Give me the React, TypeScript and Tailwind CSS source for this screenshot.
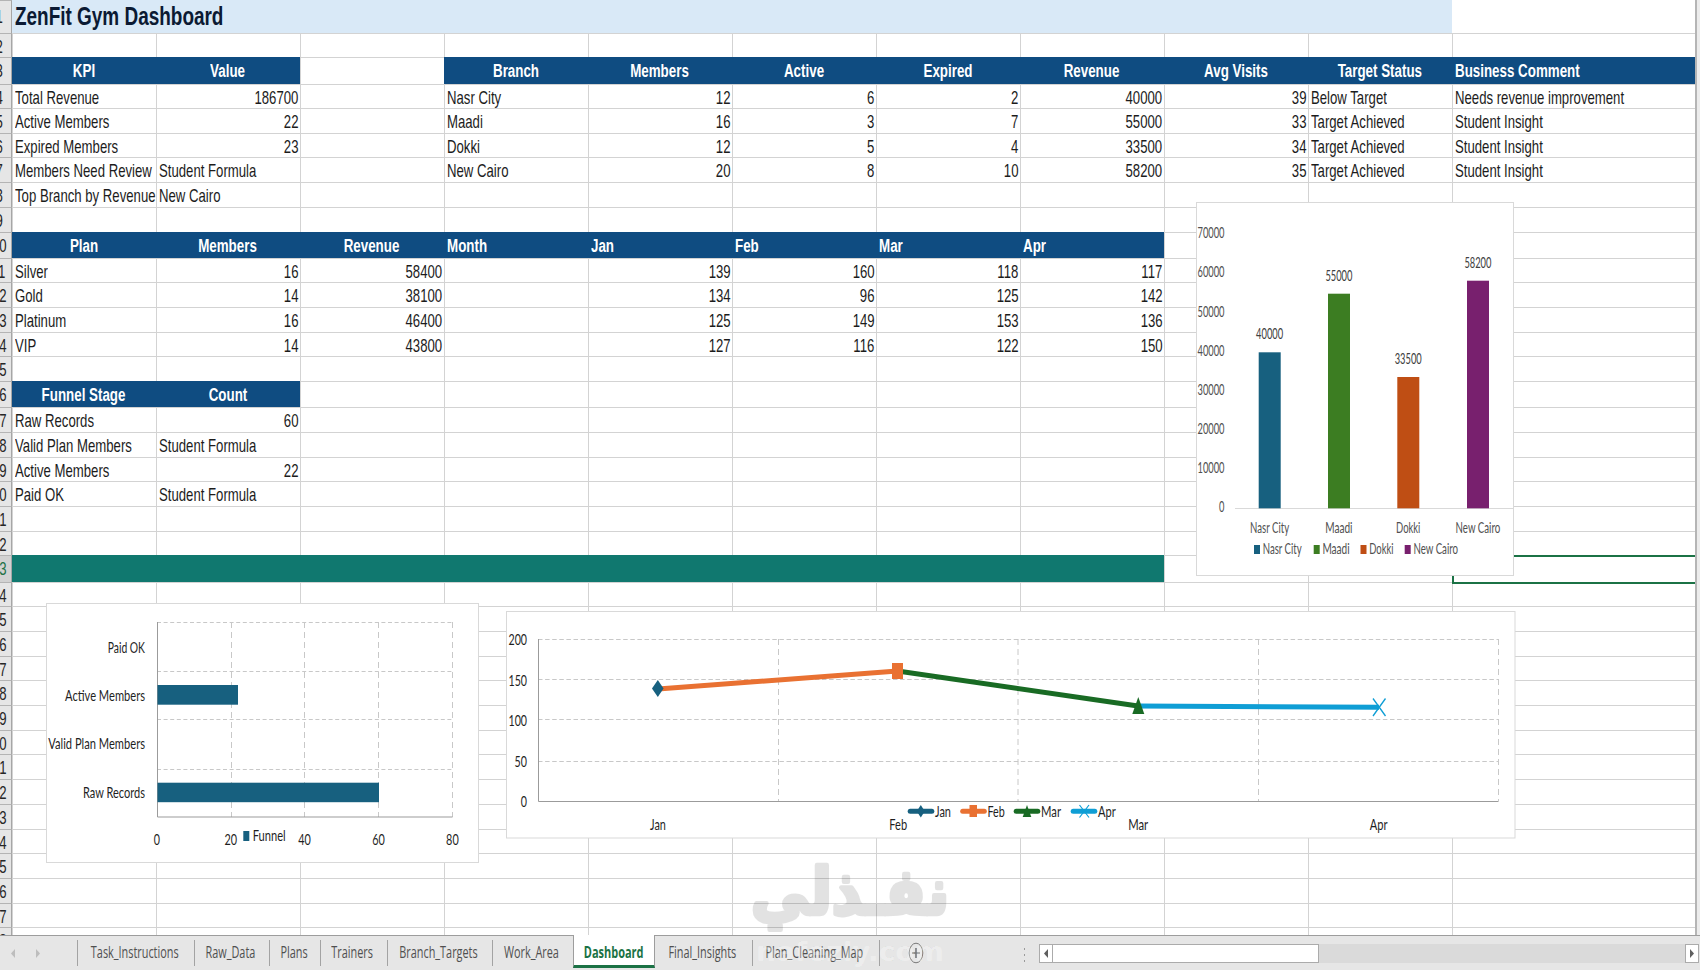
import React from "react";
import clsx from "clsx";

type Align = "left" | "center" | "right";
type Fill = "blue" | "teal" | "title" | "blank";

interface Cell {
  text?: string | number;
  align?: Align;
  fill?: Fill;
}

interface Row {
  height: number;
  cells?: Cell[];
}

const COLUMNS = 11;

// helpers for building rows
const head = (text: string, align: Align = "center"): Cell => ({ text, align, fill: "blue" });
const val = (text: string | number): Cell => ({ text });
const gap: Cell = {};
const fillRow = (fill: Fill, count: number): Cell[] => Array.from({ length: count }, () => ({ fill }));

const rows: Row[] = [
  { height: 33, cells: [{ text: "ZenFit Gym Dashboard", fill: "title" }, ...fillRow("title", 9), { fill: "blank" }] },
  { height: 24 },
  {
    height: 27,
    cells: [
      head("KPI"),
      head("Value"),
      gap,
      head("Branch"),
      head("Members"),
      head("Active"),
      head("Expired"),
      head("Revenue"),
      head("Avg Visits"),
      head("Target Status"),
      head("Business Comment", "left"),
    ],
  },
  {
    height: 24,
    cells: ["Total Revenue", 186700, "", "Nasr City", 12, 6, 2, 40000, 39, "Below Target", "Needs revenue improvement"].map(val),
  },
  {
    height: 25,
    cells: ["Active Members", 22, "", "Maadi", 16, 3, 7, 55000, 33, "Target Achieved", "Student Insight"].map(val),
  },
  {
    height: 24,
    cells: ["Expired Members", 23, "", "Dokki", 12, 5, 4, 33500, 34, "Target Achieved", "Student Insight"].map(val),
  },
  {
    height: 25,
    cells: ["Members Need Review", "Student Formula", "", "New Cairo", 20, 8, 10, 58200, 35, "Target Achieved", "Student Insight"].map(val),
  },
  { height: 25, cells: ["Top Branch by Revenue", "New Cairo"].map(val) },
  { height: 25 },
  {
    height: 26,
    cells: [
      head("Plan"),
      head("Members"),
      head("Revenue"),
      head("Month", "left"),
      head("Jan", "left"),
      head("Feb", "left"),
      head("Mar", "left"),
      head("Apr", "left"),
    ],
  },
  { height: 24, cells: ["Silver", 16, 58400, "", 139, 160, 118, 117].map(val) },
  { height: 25, cells: ["Gold", 14, 38100, "", 134, 96, 125, 142].map(val) },
  { height: 25, cells: ["Platinum", 16, 46400, "", 125, 149, 153, 136].map(val) },
  { height: 24, cells: ["VIP", 14, 43800, "", 127, 116, 122, 150].map(val) },
  { height: 25 },
  { height: 26, cells: [head("Funnel Stage"), head("Count")] },
  { height: 25, cells: ["Raw Records", 60].map(val) },
  { height: 25, cells: ["Valid Plan Members", "Student Formula"].map(val) },
  { height: 24, cells: ["Active Members", 22].map(val) },
  { height: 25, cells: ["Paid OK", "Student Formula"].map(val) },
  { height: 25 },
  { height: 24 },
  { height: 27, cells: fillRow("teal", 8) },
  { height: 24 },
  { height: 25 },
  { height: 25 },
  { height: 24 },
  { height: 25 },
  { height: 25 },
  { height: 24 },
  { height: 25 },
  { height: 25 },
  { height: 25 },
  { height: 24 },
  { height: 25 },
  { height: 25 },
  { height: 24 },
  { height: 25 },
];

const ACTIVE_ROW = 23;

const fills: Record<Fill, string> = {
  blue: "bg-[#0f4c81] border-[#0f4c81] text-white font-bold text-[18px] leading-[26px]",
  teal: "bg-[#10786f] border-[#10786f]",
  title: "bg-[#d9e9f7] border-[#d9e9f7] text-[#0b1a33] font-bold text-[25.5px] leading-[31px]",
  blank: "bg-white border-white",
};

const SheetCell = ({ cell, last, selected }: { cell: Cell; last: boolean; selected: boolean }) => {
  const align = cell.align ?? (typeof cell.text === "number" ? "right" : "left");
  return (
    <div
      className={clsx(
        "flex shrink-0 border-l border-t whitespace-nowrap",
        last ? "w-[243px]" : "w-36",
        cell.fill ? fills[cell.fill] : "border-[#d3d3d3] text-[#1c1c1c] text-[18.4px] leading-[26px]",
        align === "left" && "justify-start pl-[1.5px]",
        align === "center" && "justify-center pr-px",
        align === "right" && "justify-end pr-[1.5px]",
        selected && "relative"
      )}
    >
      <span
        className={clsx(
          align === "left" && "origin-left",
          align === "center" && "origin-center",
          align === "right" && "origin-right",
          cell.fill === "blue" ? "scale-x-[0.742]" : cell.fill === "title" ? "scale-x-[0.743]" : "scale-x-[0.716]"
        )}
      >
        {cell.text}
      </span>
      {selected && <div className="absolute -left-px right-0 -top-px -bottom-0.5 border-2 border-r-0 border-[#1b7245]" />}
    </div>
  );
};

const SheetRow = ({ row, index }: { row: Row; index: number }) => {
  const active = index === ACTIVE_ROW;
  return (
    <div className="flex shrink-0" style={{ height: row.height }}>
      <div
        className={clsx(
          "flex w-3 shrink-0 justify-center border-r border-t border-r-[#a6a6a6] border-t-[#b4b4b4] text-[18.4px] leading-[26px]",
          active ? "bg-[#d2d2d2] text-[#217346]" : "bg-[#e6e6e6] text-[#262626]",
          index === 1 && "items-center"
        )}
      >
        <span className="-ml-[13px] scale-x-[0.716]">{index}</span>
      </div>
      {Array.from({ length: COLUMNS }, (_, i) => (
        <SheetCell
          key={i}
          cell={row.cells?.[i] ?? gap}
          last={i === COLUMNS - 1}
          selected={active && i === COLUMNS - 1}
        />
      ))}
    </div>
  );
};

interface LabelProps {
  x: number;
  y: number;
  w: number;
  anchor?: "start" | "middle" | "end";
  children: React.ReactNode;
}

// chart text is squeezed to a given width
const Label = ({ x, y, w, anchor = "middle", children }: LabelProps) => (
  <text x={x} y={y} textAnchor={anchor} textLength={w} lengthAdjust="spacingAndGlyphs">
    {children}
  </text>
);

const branches = [
  { name: "Nasr City", value: 40000, x: 1258.7, top: 352.3, w: 39, color: "#17607f", legend: 1254 },
  { name: "Maadi", value: 55000, x: 1328, top: 293.7, w: 27.3, color: "#3c7d22", legend: 1313.7 },
  { name: "Dokki", value: 33500, x: 1397.3, top: 377, w: 24.3, color: "#bf4e14", legend: 1360.5 },
  { name: "New Cairo", value: 58200, x: 1467, top: 280.7, w: 44.7, color: "#78206e", legend: 1404.7 },
];

const BranchChart = () => (
  <svg
    className="absolute left-[1196px] top-[202px] h-[374px] w-[318px] text-[15px]"
    viewBox="1196 202 318 374"
    fill="#505050"
  >
    <rect x="1196.5" y="202.5" width="317" height="373" fill="#fff" stroke="#d9d9d9" />
    {[70000, 60000, 50000, 40000, 30000, 20000, 10000, 0].map((tick, i) => (
      <Label key={tick} x={1224.5} y={238.3 + i * 39.15} w={tick ? 27 : 5.4} anchor="end">
        {tick}
      </Label>
    ))}
    <path d="M1235 508.5H1513" stroke="#d9d9d9" />
    {branches.map((b) => (
      <g key={b.name}>
        <rect x={b.x} y={b.top} width="22" height={508.3 - b.top} fill={b.color} />
        <g fill="#404040">
          <Label x={b.x + 10.9} y={b.top - 12.9} w={27}>
            {b.value}
          </Label>
        </g>
        <Label x={b.x + 10.9} y={533.4} w={b.w}>
          {b.name}
        </Label>
        <rect x={b.legend} y="545" width="6" height="9" fill={b.color} />
        <Label x={b.legend + 8.7} y={554.2} w={b.w} anchor="start">
          {b.name}
        </Label>
      </g>
    ))}
  </svg>
);

const stages = [
  { name: "Paid OK", y: 653, w: 37.3 },
  { name: "Active Members", y: 701.3, w: 80 },
  { name: "Valid Plan Members", y: 749.3, w: 96.7 },
  { name: "Raw Records", y: 798.4, w: 62 },
];

const FunnelChart = () => (
  <svg
    className="absolute left-[46px] top-[603px] h-[260px] w-[433px] text-[15px]"
    viewBox="46 603 433 260"
    fill="#1f1f1f"
  >
    <rect x="46.5" y="603.5" width="432" height="259" fill="#fff" stroke="#d9d9d9" />
    <g stroke="#c8c8c8" strokeDasharray="4 2.6">
      <path d="M157 622.5H452M157 671.5H452M157 719.5H452M157 769.5H452" />
      <path d="M231.5 622V817M304.5 622V817M378.5 622V817M452.5 622V817" strokeDasharray="6 4" />
    </g>
    <path d="M157.5 622V817H452.5" fill="none" stroke="#9b9b9b" />
    <rect x="157.5" y="685" width="80.5" height="19.7" fill="#17607f" />
    <rect x="157.5" y="782.7" width="221.5" height="19.5" fill="#17607f" />
    {stages.map((s) => (
      <Label key={s.name} x={145} y={s.y} w={s.w} anchor="end">
        {s.name}
      </Label>
    ))}
    {[0, 20, 40, 60, 80].map((tick, i) => (
      <Label key={tick} x={156.8 + i * 73.9} y={845.3} w={tick ? 12.6 : 6.2}>
        {tick}
      </Label>
    ))}
    <rect x="243.3" y="831" width="6" height="10" fill="#17607f" />
    <Label x={252.7} y={841.2} w={33} anchor="start">
      Funnel
    </Label>
  </svg>
);

const legendLines = [
  { name: "Jan", x: 908, color: "#17607f", w: 16 },
  { name: "Feb", x: 960.5, color: "#e97132", w: 17.3 },
  { name: "Mar", x: 1014, color: "#196b24", w: 20 },
  { name: "Apr", x: 1071, color: "#0f9ed5", w: 17.7 },
];

const MonthChart = () => (
  <svg
    className="absolute left-[506px] top-[611px] h-[228px] w-[1010px] text-[15px]"
    viewBox="506 611 1010 228"
    fill="#1f1f1f"
  >
    <rect x="506.5" y="611.5" width="1008.5" height="226.5" fill="#fff" stroke="#d9d9d9" />
    <g stroke="#c8c8c8" strokeDasharray="4.5 2.6">
      <path d="M538 639.5H1498M538 679.5H1498M538 719.5H1498M538 761.5H1498" />
      <path d="M778.5 639V801M1018 639V801M1258.5 639V801M1498.5 639V801" strokeDasharray="6 4" />
    </g>
    <path d="M538.5 639V801.5H1498.5" fill="none" stroke="#9b9b9b" />
    {[200, 150, 100, 50, 0].map((tick, i) => (
      <Label key={tick} x={527} y={645.2 + i * 40.5} w={tick > 50 ? 18.5 : tick ? 12.4 : 6.2} anchor="end">
        {tick}
      </Label>
    ))}
    <g strokeWidth="5" fill="none">
      <path d="M658 689L897.5 671" stroke="#e97132" />
      <path d="M897.5 671L1138 706" stroke="#196b24" />
      <path d="M1138 706L1379 707.3" stroke="#0f9ed5" />
    </g>
    <path d="M657.8 680l5.8 8.5-5.8 8.5-5.8-8.5z" fill="#17607f" />
    <rect x="892" y="663" width="11" height="16" fill="#e97132" />
    <path d="M1138.3 697l6 17h-12z" fill="#196b24" />
    <path d="M1373 698.5l12.5 17.5M1385.5 698.5L1373 716" stroke="#0f9ed5" strokeWidth="1.3" />
    <Label x={658} y={829.6} w={15.8}>Jan</Label>
    <Label x={898.2} y={829.6} w={17.8}>Feb</Label>
    <Label x={1138.2} y={829.6} w={20}>Mar</Label>
    <Label x={1378.6} y={829.6} w={17.8}>Apr</Label>
    {legendLines.map((l) => (
      <g key={l.name}>
        <path d={`M${l.x + 2.2} 811.3h21.6`} stroke={l.color} strokeWidth="5" strokeLinecap="round" />
        <Label x={l.x + 27} y={816.8} w={l.w} anchor="start">
          {l.name}
        </Label>
      </g>
    ))}
    <path d="M920.8 805l4 6.3-4 6.3-4-6.3z" fill="#17607f" />
    <rect x="969.5" y="805" width="7.5" height="12" fill="#e97132" />
    <path d="M1027 805l4.3 12h-8.6z" fill="#196b24" />
    <path d="M1079.5 805l9.5 12.5M1089 805l-9.5 12.5" stroke="#0f9ed5" strokeWidth="1.2" />
  </svg>
);

const tabs = [
  { name: "Task_Instructions", width: 117 },
  { name: "Raw_Data", width: 75 },
  { name: "Plans", width: 51 },
  { name: "Trainers", width: 67 },
  { name: "Branch_Targets", width: 105 },
  { name: "Work_Area", width: 81 },
  { name: "Dashboard", width: 82 },
  { name: "Final_Insights", width: 97 },
  { name: "Plan_Cleaning_Map", width: 127 },
];

const Arrow = ({ right }: { right?: boolean }) => (
  <svg viewBox="0 0 4 9" className="h-[9px] w-1" fill="currentColor">
    <path d={right ? "M0 0l4 4.5L0 9z" : "M4 0L0 4.5 4 9z"} />
  </svg>
);

const TabBar = () => {
  const [current, setCurrent] = React.useState("Dashboard");
  return (
    <div className="flex h-[35px] shrink-0 border-t border-[#9d9d9d] bg-[#e6e6e6] font-['Open_Sans',sans-serif]">
      <div className="flex w-[77px] shrink-0 items-center gap-[21px] pl-[11px] text-[#bdbdbd]">
        <Arrow />
        <Arrow right />
      </div>
      {tabs.map((tab, i) => {
        const active = tab.name === current;
        return (
          <button
            key={tab.name}
            onClick={() => setCurrent(tab.name)}
            style={{ width: tab.width }}
            className={clsx(
              "flex shrink-0 justify-center whitespace-nowrap text-[16.8px]",
              active
                ? "-mt-px h-[33px] border-x border-b-[3px] border-x-[#9d9d9d] border-b-[#1b7245] bg-white leading-[34px] font-bold text-[#1b7245]"
                : "relative pr-0.5 leading-[32px] text-[#505050]"
            )}
          >
            {!active && tabs[i - 1]?.name !== current && <span className="absolute left-0 top-1 h-[26px] w-px bg-[#a3a3a3]" />}
            <span className={active ? "scale-x-[0.655]" : "scale-x-[0.648]"}>{tab.name}</span>
          </button>
        );
      })}
      <div className="mt-1 h-[26px] w-px bg-[#a3a3a3]" />
      <svg className="ml-[28px] mt-[6px] h-[22px] w-4" viewBox="0 0 16 22" fill="none" stroke="#777">
        <ellipse cx="8" cy="11" rx="6.8" ry="9.8" />
        <path d="M8 6v10M4 11h8" strokeWidth="1.6" />
      </svg>
      <div className="ml-[100px] mt-3 flex w-px flex-col gap-1">
        <span className="h-[2px] bg-[#9a9a9a]" />
        <span className="h-[2px] bg-[#9a9a9a]" />
        <span className="h-[2px] bg-[#9a9a9a]" />
      </div>
      <div className="ml-[14px] mt-2 flex h-[19px] w-[660px] bg-[#dadada] text-[#5f5f5f]">
        <div className="flex w-3.5 items-center justify-center border border-[#ababab] bg-white">
          <Arrow />
        </div>
        <div className="-ml-px w-[267px] border border-[#ababab] bg-white" />
        <div className="ml-auto flex w-3.5 items-center justify-center border border-[#ababab] bg-white">
          <Arrow right />
        </div>
      </div>
    </div>
  );
};

const Watermark = () => (
  <svg className="pointer-events-none absolute left-[740px] top-[850px] h-[120px] w-[220px]" viewBox="740 850 220 120">
    <g opacity="0.11">
      <text
        x="850"
        y="914"
        textAnchor="middle"
        textLength="198"
        lengthAdjust="spacingAndGlyphs"
        direction="rtl"
        fill="#000"
        stroke="#000"
        strokeWidth="4.5"
        strokeLinejoin="round"
        className="font-['DejaVu_Sans',sans-serif] text-[64px] font-bold"
      >
        نفـذلي
      </text>
    </g>
    <text
      x="756"
      y="961"
      textLength="188"
      lengthAdjust="spacingAndGlyphs"
      fill="#fff"
      fillOpacity="0.3"
      stroke="#000"
      strokeOpacity="0.03"
      className="font-['DejaVu_Sans',sans-serif] text-[26px] font-bold"
    >
      nafezly.com
    </text>
  </svg>
);

const App = () => {
  return (
    <main className="relative flex h-[970px] w-[1700px] flex-col overflow-hidden bg-white font-['Liberation_Sans',sans-serif]">
      <div className="flex h-[935px] shrink-0 overflow-hidden">
        <div className="flex w-[1695px] shrink-0 flex-col overflow-hidden">
          {rows.map((row, i) => (
            <SheetRow key={i} row={row} index={i + 1} />
          ))}
        </div>
        <div className="flex-1 border-l-2 border-[#b5b5b5] bg-[#ececec]" />
      </div>
      <TabBar />
      <div className="font-['Lato',sans-serif]">
        <BranchChart />
        <FunnelChart />
        <MonthChart />
      </div>
      <Watermark />
    </main>
  );
};

export default App;
